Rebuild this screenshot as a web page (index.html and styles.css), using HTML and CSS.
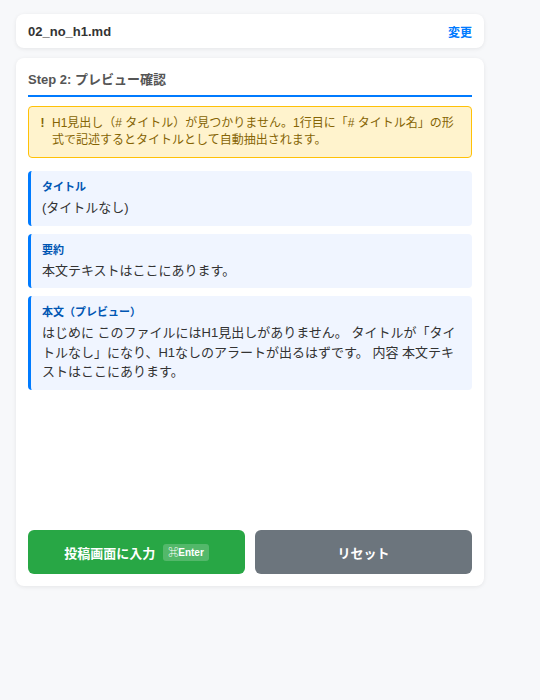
FILE: index.html
```html
<!DOCTYPE html>
<html lang="ja">
<head>
<meta charset="utf-8">
<title>Preview</title>
<link rel="stylesheet" href="styles.css">
</head>
<body>
<div class="app">
  <div class="card file-card">
    <span class="file-name">02_no_h1.md</span>
    <a class="change-link">変更</a>
  </div>
  <div class="card main-card">
    <h2 class="step-title">Step 2: プレビュー確認</h2>
    <div class="alert">
      <span class="alert-icon">!</span>
      <span class="alert-text">H1見出し（# タイトル）が見つかりません。1行目に「# タイトル名」の形式で記述するとタイトルとして自動抽出されます。</span>
    </div>
    <div class="field">
      <div class="field-label">タイトル</div>
      <div class="field-value">(タイトルなし)</div>
    </div>
    <div class="field">
      <div class="field-label">要約</div>
      <div class="field-value">本文テキストはここにあります。</div>
    </div>
    <div class="field">
      <div class="field-label">本文（プレビュー）</div>
      <div class="field-value">はじめに このファイルにはH1見出しがありません。 タイトルが「タイトルなし」になり、H1なしのアラートが出るはずです。 内容 本文テキストはここにあります。</div>
    </div>
    <div class="actions">
      <button class="btn btn-primary">投稿画面に入力<span class="kbd">⌘Enter</span></button>
      <button class="btn btn-secondary">リセット</button>
    </div>
  </div>
</div>
</body>
</html>
```
FILE: styles.css
```css
* { box-sizing: border-box; }
html, body {
  margin: 0;
  padding: 0;
  background: #f7f8fa;
  font-family: "Liberation Sans", "Noto Sans CJK JP", sans-serif;
  color: #333;
}
.app {
  width: 500px;
  padding: 14px 16px;
  display: flex;
  flex-direction: column;
  gap: 10px;
}
.card {
  background: #fff;
  border-radius: 8px;
  box-shadow: 0 1px 4px rgba(0, 0, 0, 0.08);
}
.file-card {
  height: 34px;
  padding: 0 12px;
  display: flex;
  align-items: center;
  justify-content: space-between;
}
.file-name {
  font-size: 13px;
  font-weight: 600;
  color: #333;
}
.change-link {
  font-size: 12px;
  font-weight: 700;
  color: #007bff;
  cursor: pointer;
}
.main-card {
  height: 528px;
  padding: 12px;
  display: flex;
  flex-direction: column;
}
.step-title {
  margin: 0;
  font-size: 13px;
  line-height: 20px;
  font-weight: 700;
  color: #555;
  padding-bottom: 5px;
  border-bottom: 2px solid #007bff;
}
.alert {
  margin-top: 9px;
  margin-bottom: 13px;
  display: flex;
  gap: 7px;
  padding: 8px 11px;
  background: #fff3cd;
  border: 1px solid #ffc107;
  border-radius: 4px;
  color: #856404;
  font-size: 12px;
  line-height: 17px;
}
.alert-icon {
  font-weight: 700;
  width: 5px;
  flex: none;
  text-align: center;
}
.field {
  background: #f0f5ff;
  border-left: 3px solid #007bff;
  border-radius: 4px;
  padding: 8px 11px;
  margin-bottom: 8px;
}
.field-label {
  font-size: 11px;
  line-height: 17px;
  font-weight: 700;
  color: #0056b3;
  margin-bottom: 2px;
}
.field-value {
  font-size: 13px;
  line-height: 19.5px;
  color: #333;
}
.actions {
  margin-top: auto;
  display: flex;
  gap: 10px;
}
.btn {
  flex: 1;
  height: 44px;
  border: none;
  border-radius: 6px;
  color: #fff;
  font-family: inherit;
  font-size: 13px;
  font-weight: 700;
  display: flex;
  align-items: center;
  justify-content: center;
  gap: 8px;
}
.btn-primary { background: #28a745; }
.btn-secondary { background: #6c757d; }
.kbd {
  font-size: 10px;
  font-weight: 700;
  line-height: 13px;
  padding: 2px 5px;
  border-radius: 3px;
  background: rgba(255, 255, 255, 0.2);
}
```
